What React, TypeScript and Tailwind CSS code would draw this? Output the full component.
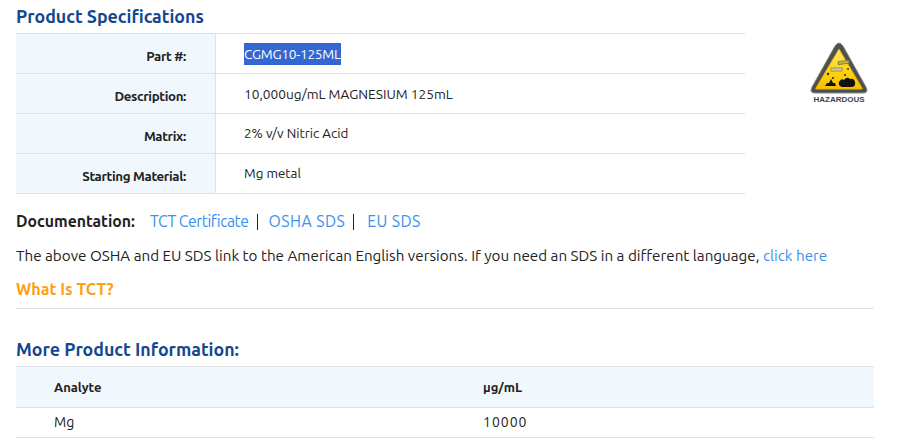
import React from "react";

const specs = [
  { label: "Part #:", value: "CGMG10-125ML", selected: true, valueClass: "pt-[1px] text-[13.7px]" },
  { label: "Description:", value: "10,000ug/mL MAGNESIUM 125mL", valueClass: "pt-[1px] text-[13.7px]" },
  { label: "Matrix:", value: "2% v/v Nitric Acid", valueClass: "pt-[2px] text-[13.4px]" },
  { label: "Starting Material:", value: "Mg metal", valueClass: "pt-[2px] text-[13.4px]" },
];

const HazardIcon = () => (
  <svg width="60" height="54" viewBox="0 0 60 54">
    <defs>
      <linearGradient id="hazardFill" x1="0" y1="0" x2="0" y2="1">
        <stop offset="0" stopColor="#ffe97a" />
        <stop offset="0.5" stopColor="#fdd60f" />
        <stop offset="1" stopColor="#f7bf00" />
      </linearGradient>
    </defs>
    <path d="M30 2 Q32 2 34 5 L57 46 Q60 52 54 52 L6 52 Q0 52 3 46 L26 5 Q28 2 30 2 Z" fill="#4f4f4f" stroke="#8a8a8a" strokeWidth="1" />
    <path d="M30 8 L53 47 Q54 48 52 48 L8 48 Q6 48 7 47 Z" fill="url(#hazardFill)" stroke="#f0b400" strokeWidth="1" strokeLinejoin="round" />
    <rect x="29" y="20" width="11" height="3" fill="#c9b23a" stroke="#666" strokeWidth="0.7" transform="rotate(-8 34 21)" />
    <rect x="22" y="27" width="11" height="3" fill="#e2d26a" stroke="#777" strokeWidth="0.7" />
    <circle cx="39" cy="28" r="1" fill="#333" />
    <circle cx="36" cy="34" r="1" fill="#222" />
    <circle cx="19" cy="33" r="1.2" fill="#222" />
    <circle cx="24" cy="37" r="1" fill="#222" />
    <path d="M16 45 L27 45 L26 42 L24 42 L22 38 L20 42 L18 42 Z" fill="#111" />
    <path d="M30 41 Q32 37 35 39 Q38 35 41 38 Q45 37 46 41 Q47 46 42 46 L33 46 Q29 45 30 41 Z" fill="#111" />
  </svg>
);

export default function App() {
  return (
    <div className="min-h-[446px] w-[905px] bg-white pl-4 font-['Ubuntu','Noto_Sans',sans-serif] text-[14px] text-[#222]">
      <h2 className="h-[33px] pt-[3px] text-[17.8px] leading-[26px] font-semibold text-[#13478f]">Product Specifications</h2>

      <div className="flex">
        <div className="w-[729px] border-t border-[#dee2e6]">
          {specs.map((row) => (
            <div key={row.label} className="flex h-10 border-b border-[#dee2e6]">
              <div className="flex w-[200px] items-center justify-end border-r border-[#dee2e6] bg-[#f0f7fd] pt-[6px] pr-[29px] text-[13.3px] font-bold tracking-[-0.35px]">
                {row.label}
              </div>
              <div className={`flex items-center pl-[28px] ${row.valueClass}`}>
                {row.selected ? <span className="bg-[#3367d1] leading-[22px] tracking-[-0.25px] text-white">{row.value}</span> : row.value}
              </div>
            </div>
          ))}
        </div>
        <div className="ml-[64px] flex flex-col items-center pt-[8px]">
          <HazardIcon />
          <span className="font-['Liberation_Sans',sans-serif] text-[8px] leading-[10px] font-bold text-[#444]">HAZARDOUS</span>
        </div>
      </div>

      <div className="mt-[17px] flex h-[22px] items-center text-[15.8px]">
        <span className="font-semibold">Documentation:</span>
        <a className="ml-[15px] tracking-[-0.5px] text-[#3a90ee]">TCT Certificate</a>
        <span className="ml-[8px] h-[16px] w-px bg-[#222]" />
        <a className="ml-[11px] tracking-[0.45px] text-[#3a90ee]">OSHA SDS</a>
        <span className="ml-[8px] h-[16px] w-px bg-[#222]" />
        <a className="ml-[13px] tracking-[0.45px] text-[#3a90ee]">EU SDS</a>
      </div>

      <p className="mt-[13px] text-[15.22px] leading-[20px]">
        The above OSHA and EU SDS link to the American English versions. If you need an SDS in a different language, <a className="text-[#3a90ee]">click here</a>
      </p>

      <div className="mt-[13px] w-[858px] border-b border-[#dee2e6] pb-[9px] text-[16.15px] leading-[20px] font-semibold text-[#ff9f0f]">What Is TCT?</div>

      <h2 className="mt-[27px] h-[30px] text-[17.8px] leading-[26px] font-semibold text-[#13478f]">More Product Information:</h2>

      <div className="w-[858px] border-t border-[#dee2e6]">
        <div className="flex h-[41px] items-center border-b border-[#dee2e6] bg-[#f0f7fd] pt-[1px] text-[13px] font-bold">
          <div className="w-[429px] pl-[38px]">Analyte</div>
          <div className="pl-[38px]">µg/mL</div>
        </div>
        <div className="flex h-[30px] items-center border-b border-[#dee2e6] text-[14px]">
          <div className="w-[429px] pl-[38px]">Mg</div>
          <div className="pl-[38px] tracking-[1px]">10000</div>
        </div>
      </div>
    </div>
  );
}
